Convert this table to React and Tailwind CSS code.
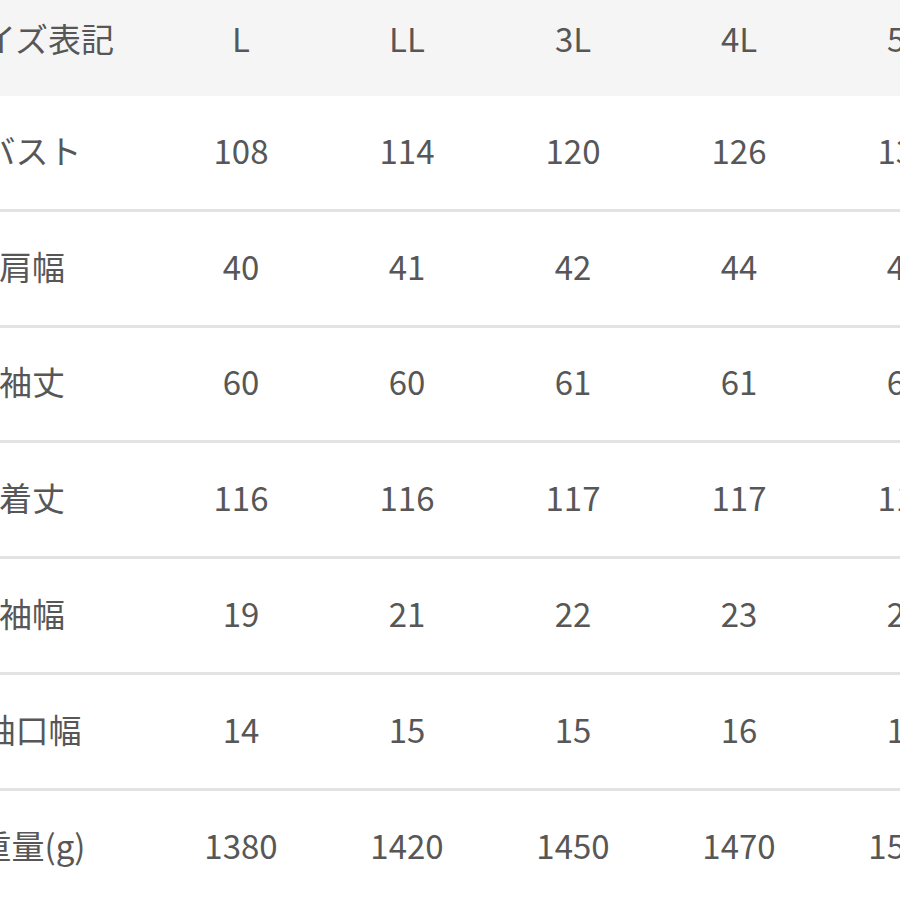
import React from "react";

const header = ["サイズ表記", "L", "LL", "3L", "4L", "5L"];
const rows = [
  ["バスト", "108", "114", "120", "126", "132"],
  ["肩幅", "40", "41", "42", "44", "46"],
  ["袖丈", "60", "60", "61", "61", "62"],
  ["着丈", "116", "116", "117", "117", "118"],
  ["袖幅", "19", "21", "22", "23", "24"],
  ["袖口幅", "14", "15", "15", "16", "17"],
  ["重量(g)", "1380", "1420", "1450", "1470", "1500"],
];

function Row({ cells, className }) {
  return (
    <div className={"grid grid-cols-[252px_166px_166px_166px_166px_166px] items-center " + className}>
      {cells.map((c, i) => (
        <div key={i} className="text-center whitespace-nowrap">
          {c}
        </div>
      ))}
    </div>
  );
}

export default function App() {
  return (
    <div
      className="w-[900px] h-[900px] overflow-hidden bg-white text-[#575757] text-[33px] leading-none"
      style={{ fontFamily: '"Noto Sans CJK JP", "Noto Sans", sans-serif' }}
    >
      <div className="ml-[-94px] mt-[-20px] w-[1082px]">
        <Row cells={header} className="h-[116px] bg-[#f5f5f5]" />
        {rows.map((r, i) => (
          <Row key={i} cells={r} className="h-[115.8px] pb-[4px] border-b-[3px] border-[#e3e3e3] box-border" />
        ))}
      </div>
    </div>
  );
}
